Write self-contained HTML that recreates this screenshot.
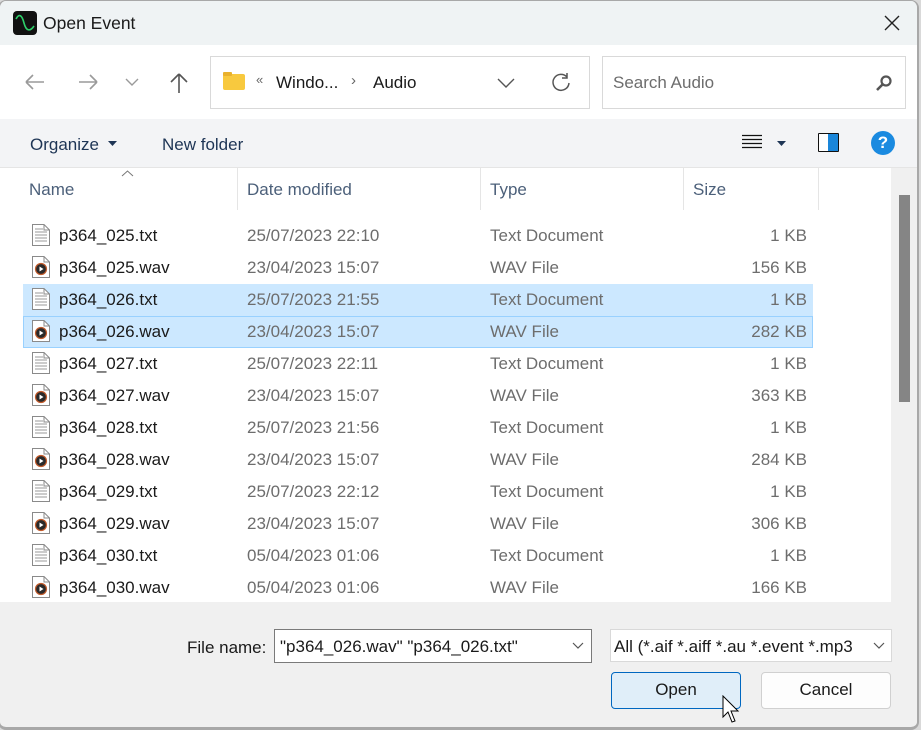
<!DOCTYPE html>
<html><head><meta charset="utf-8"><style>
*{box-sizing:border-box;margin:0;padding:0}
html,body{width:921px;height:730px;overflow:hidden;background:#d9d9d9;font-family:"Liberation Sans",sans-serif}
.win{position:absolute;left:-2px;top:0;width:921px;height:730px;background:#f0f0f0;border:1px solid #a8a8a8;border-width:1px 2px 3px 2px;border-radius:8px;overflow:hidden}
.title{position:absolute;left:0;top:0;width:100%;height:44px;background:#eff3f4}
.nav{position:absolute;left:0;top:44px;width:100%;height:74px;background:#fff}
.tool{position:absolute;left:0;top:118px;width:100%;height:49px;background:#f3f4f6;border-bottom:1px solid #e5e5e5}
.list{position:absolute;left:0;top:167px;width:891px;height:434px;background:#fff}
.t{position:absolute;white-space:nowrap}
.row{position:absolute;left:0;height:32px;width:891px;font-size:17px}
.row .n{left:59px;top:7px;color:#1a1a1a}
.row .d{left:247px;top:7px;color:#6d6d6d}
.row .ty{left:490px;top:7px;color:#6d6d6d}
.row .s{right:84px;top:7px;color:#6d6d6d}
.sel{position:absolute;left:23px;width:790px;height:32px;background:#cce8ff}
.ic{position:absolute;left:31px;top:4px}
.hd{position:absolute;top:12px;font-size:17px;color:#4c607a}
.sep{position:absolute;top:0;width:1px;height:42px;background:#e5e5e5}
.box{position:absolute;border:1px solid #d9d9d9;background:#fff}
.btn{position:absolute;border-radius:4px;font-size:17px;text-align:center;line-height:34px;color:#1a1a1a}
</style></head><body>
<div class="win">
<div class="title">
 <div style="position:absolute;left:13px;top:10px;width:24px;height:24px;background:#111;border-radius:4px">
  <svg width="24" height="24" viewBox="0 0 24 24"><path d="M3 8 C6 2,9 4,11 12 C13 20,17 21,21 15" stroke="#2ecf6a" stroke-width="1.6" fill="none"/></svg></div>
 <div class="t" style="left:43px;top:12px;font-size:17.5px;color:#1a1a1a">Open Event</div>
 <svg style="position:absolute;left:884px;top:14px" width="16" height="16"><path d="M1 1L15 15M15 1L1 15" stroke="#222" stroke-width="1.4"/></svg>
</div>
<div class="nav">
 <svg style="position:absolute;left:24px;top:28px" width="22" height="18"><path d="M2 9H20M2 9L9 2M2 9L9 16" stroke="#9a9a9a" stroke-width="1.6" fill="none"/></svg>
 <svg style="position:absolute;left:77px;top:28px" width="22" height="18"><path d="M2 9H20M20 9L13 2M20 9L13 16" stroke="#9a9a9a" stroke-width="1.6" fill="none"/></svg>
 <svg style="position:absolute;left:125px;top:33px" width="14" height="9"><path d="M1 1L7 7L13 1" stroke="#9a9a9a" stroke-width="1.4" fill="none"/></svg>
 <svg style="position:absolute;left:169px;top:27px" width="20" height="22"><path d="M10 21V2M10 2L2 10M10 2L18 10" stroke="#555" stroke-width="1.6" fill="none"/></svg>
 <div class="box" style="left:210px;top:11px;width:380px;height:53px">
  <div style="position:absolute;left:12px;top:17px;width:22px;height:16px;background:#f8c93e;border-radius:2px"></div>
  <div style="position:absolute;left:12px;top:15px;width:9px;height:4px;background:#e9b12d;border-radius:1px"></div>
  <div class="t" style="left:45px;top:15px;font-size:13px;color:#666">«</div>
  <div class="t" style="left:65px;top:16px;font-size:17px;color:#1a1a1a">Windo...</div>
  <div class="t" style="left:140px;top:15px;font-size:15px;color:#666">›</div>
  <div class="t" style="left:162px;top:16px;font-size:17px;color:#1a1a1a">Audio</div>
  <svg style="position:absolute;left:286px;top:21px" width="18" height="11"><path d="M1 1L9 9L17 1" stroke="#555" stroke-width="1.4" fill="none"/></svg>
  <svg style="position:absolute;left:339px;top:14px" width="22" height="22"><path d="M17 6A8 8 0 1 0 19 12M17 2V7H12" stroke="#555" stroke-width="1.5" fill="none"/></svg>
 </div>
 <div class="box" style="left:602px;top:11px;width:304px;height:53px">
  <div class="t" style="left:10px;top:16px;font-size:17px;color:#6d6d6d">Search Audio</div>
  <svg style="position:absolute;left:272px;top:17px" width="18" height="18"><circle cx="11" cy="7" r="4.5" stroke="#555" stroke-width="2.2" fill="none"/><path d="M8 10L2 16" stroke="#555" stroke-width="2.6"/></svg>
 </div>
</div>
<div class="tool">
 <div class="t" style="left:30px;top:16px;font-size:17px;color:#1e3555">Organize</div>
 <svg style="position:absolute;left:108px;top:22px" width="9" height="6"><path d="M0 0H9L4.5 5Z" fill="#1e3555"/></svg>
 <div class="t" style="left:162px;top:16px;font-size:17px;color:#1e3555">New folder</div>
 <svg style="position:absolute;left:742px;top:15px" width="20" height="16"><path d="M0 1.5H20M0 5.5H20M0 9.5H20M0 13.5H20" stroke="#111" stroke-width="1.2"/></svg>
 <svg style="position:absolute;left:777px;top:22px" width="9" height="6"><path d="M0 0H9L4.5 5Z" fill="#1e3555"/></svg>
 <div style="position:absolute;left:818px;top:14px;width:21px;height:19px;border:1.5px solid #111;border-radius:1px;background:linear-gradient(90deg,#fff 48%,#1a86d9 48%)"></div>
 <div style="position:absolute;left:871px;top:12px;width:24px;height:24px;border-radius:50%;background:#1a8ae0;color:#fff;font-size:17px;font-weight:bold;text-align:center;line-height:24px">?</div>
</div>
<div class="list">
 <svg style="position:absolute;left:121px;top:2px" width="13" height="7"><path d="M1 6L6.5 1L12 6" stroke="#777" stroke-width="1" fill="none"/></svg>
 <div class="hd" style="left:29px">Name</div>
 <div class="sep" style="left:237px"></div>
 <div class="hd" style="left:247px">Date modified</div>
 <div class="sep" style="left:480px"></div>
 <div class="hd" style="left:490px">Type</div>
 <div class="sep" style="left:683px"></div>
 <div class="hd" style="left:693px">Size</div>
 <div class="sep" style="left:818px"></div>
</div>
<div style="position:absolute;left:891px;top:167px;width:25px;height:434px;background:#f0f0f0"></div>
<div style="position:absolute;left:899px;top:194px;width:11px;height:207px;background:#858585"></div>
<div id="rows"></div>
<div class="t" style="left:187px;top:637px;font-size:17px;color:#1a1a1a">File name:</div>
<div class="box" style="left:274px;top:628px;width:318px;height:34px;border-color:#7a7a7a">
 <div class="t" style="left:5px;top:7px;font-size:17px;color:#1a1a1a">"p364_026.wav" "p364_026.txt"</div>
 <svg style="position:absolute;left:297px;top:12px" width="12" height="8"><path d="M1 1L6 6L11 1" stroke="#555" stroke-width="1.2" fill="none"/></svg>
</div>
<div class="box" style="left:610px;top:628px;width:282px;height:33px;overflow:hidden">
 <div class="t" style="left:3px;top:7px;font-size:17px;color:#1a1a1a">All (*.aif *.aiff *.au *.event *.mp3</div>
 <div style="position:absolute;right:0;top:0;width:30px;height:31px;background:#fff"></div>
 <svg style="position:absolute;left:262px;top:12px" width="12" height="8"><path d="M1 1L6 6L11 1" stroke="#555" stroke-width="1.2" fill="none"/></svg>
</div>
<div class="btn" style="left:611px;top:671px;width:130px;height:37px;background:#e0eef9;border:1px solid #0067c0">Open</div>
<div class="btn" style="left:761px;top:671px;width:130px;height:37px;background:#fdfdfd;border:1px solid #d0d0d0">Cancel</div>
<svg style="position:absolute;left:722px;top:694px" width="20" height="30"><path d="M1 1V22L6 17L10 27L13 26L9 16H16Z" fill="#fff" stroke="#000" stroke-width="1"/></svg>
</div>
<script>
var r=[["p364_025.txt","25/07/2023 22:10","Text Document","1 KB"],["p364_025.wav","23/04/2023 15:07","WAV File","156 KB"],["p364_026.txt","25/07/2023 21:55","Text Document","1 KB"],["p364_026.wav","23/04/2023 15:07","WAV File","282 KB"],["p364_027.txt","25/07/2023 22:11","Text Document","1 KB"],["p364_027.wav","23/04/2023 15:07","WAV File","363 KB"],["p364_028.txt","25/07/2023 21:56","Text Document","1 KB"],["p364_028.wav","23/04/2023 15:07","WAV File","284 KB"],["p364_029.txt","25/07/2023 22:12","Text Document","1 KB"],["p364_029.wav","23/04/2023 15:07","WAV File","306 KB"],["p364_030.txt","05/04/2023 01:06","Text Document","1 KB"],["p364_030.wav","05/04/2023 01:06","WAV File","166 KB"]];
var txt='<svg class="ic" width="20" height="24"><path d="M1.5 1.5H13L18.5 7V22.5H1.5Z" fill="#fff" stroke="#8a8a8a"/><path d="M13 1.5V7H18.5" fill="none" stroke="#8a8a8a"/><path d="M4 6H12M4 9H16M4 12H16M4 15H16M4 18H16" stroke="#9a9a9a"/></svg>';
var wav='<svg class="ic" width="20" height="24"><path d="M1.5 1.5H13L18.5 7V22.5H1.5Z" fill="#fff" stroke="#8a8a8a"/><path d="M13 1.5V7H18.5" fill="none" stroke="#8a8a8a"/><circle cx="10" cy="14" r="5.5" fill="#2a2a2a" stroke="#c25a2a" stroke-width="1.2"/><path d="M8.5 11.5V16.5L12.5 14Z" fill="#fff"/></svg>';
var h='';for(var i=0;i<r.length;i++){var y=220+i*32;
if(i==2||i==3)h+='<div class="sel" style="top:'+(y-1)+'px;'+(i==3?'border:1px solid #99d1ff;':'')+'"></div>';
h+='<div class="row" style="top:'+(y-2)+'px">'+(r[i][0].indexOf('txt')>0?txt:wav)+'<div class="t n">'+r[i][0]+'</div><div class="t d">'+r[i][1]+'</div><div class="t ty">'+r[i][2]+'</div><div class="t s">'+r[i][3]+'</div></div>';}
document.getElementById('rows').innerHTML=h;
</script>
</body></html>
